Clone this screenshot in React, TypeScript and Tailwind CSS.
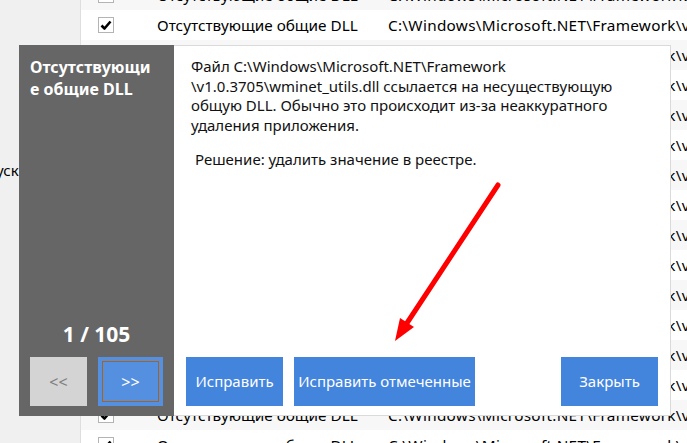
import React from 'react';

const rows = Array.from({ length: 16 }, (_, i) => i);

function CheckBox() {
  return (
    <span className="flex h-[16px] w-[16px] shrink-0 items-center justify-center border border-[#b4b4b4] bg-white">
      <svg width="12" height="12" viewBox="0 0 12 12">
        <path d="M1.5 6.5 L4.5 9.5 L10.5 2.5" fill="none" stroke="#000" strokeWidth="2.6" strokeLinejoin="round" />
      </svg>
    </span>
  );
}

function ListRow({ index }: { index: number }) {
  return (
    <div
      className={
        'flex h-[30px] items-center whitespace-nowrap pl-[17px] text-[15.3px] text-black ' +
        (index % 2 === 0 ? 'bg-[#f7f7f7]' : 'bg-white')
      }
    >
      <CheckBox />
      <span className="ml-[43px] w-[231px] shrink-0 overflow-hidden">Отсутствующие общие DLL</span>
      <span className="tracking-[0.3px]">C:\Windows\Microsoft.NET\Framework\v1.0.3705\wminet_utils.dll</span>
    </div>
  );
}

export default function App() {
  return (
    <div
      className="relative h-[443px] w-[687px] overflow-hidden bg-white"
      style={{ fontFamily: '"Noto Sans", "Open Sans", sans-serif' }}
    >
      {/* window behind the dialog: side menu and issue list */}
      <div className="flex h-full">
        <aside className="w-[81px] shrink-0 border-r border-[#dedede] bg-[#f0f0f0] pt-[159px] text-[15px] text-black">
          <div className="ml-[-30px] whitespace-nowrap">Запуск</div>
        </aside>
        <div className="mt-[-20px] min-w-0 flex-1">
          {rows.map((i) => (
            <ListRow key={i} index={i} />
          ))}
        </div>
      </div>

      {/* details dialog */}
      <div className="absolute left-[19px] top-[45px] flex h-[371px] w-[652px]">
        <div className="flex w-[155px] flex-col bg-[#666666] px-[11px] pt-[11px] pb-[10px]">
          <h2 className="w-[128px] break-all text-[16px] font-bold leading-[22px] text-white">
            Отсутствующие общие DLL
          </h2>
          <div className="mt-auto text-center text-[21px] font-bold leading-[27px] text-white">1 / 105</div>
          <div className="mt-[9px] flex gap-[11px]">
            <button className="flex h-[49px] flex-1 items-center justify-center bg-[#d4d4d4] text-[16px] text-[#808080]">
              &lt;&lt;
            </button>
            <button className="flex h-[49px] flex-1 items-center justify-center bg-[#5590e0] p-[4px]">
              <span className="flex h-full w-full items-center justify-center border border-[#a8641e] text-[16px] text-white">
                &gt;&gt;
              </span>
            </button>
          </div>
        </div>

        <div className="flex flex-1 flex-col border border-l-0 border-[#dadada] bg-white px-[12px] pt-[11px] pb-[9px] text-[15px] text-[#111]">
          <p className="pl-[5px] leading-[19.5px]">
            Файл C:\Windows\Microsoft.NET\Framework
            <br />
            \v1.0.3705\wminet_utils.dll ссылается на несуществующую
            <br />
            общую DLL. Обычно это происходит из-за неаккуратного
            <br />
            удаления приложения.
          </p>
          <p className="mt-[15px] pl-[9px] leading-[19.5px]">Решение: удалить значение в реестре.</p>

          <div className="mt-auto flex gap-[11px]">
            <button className="h-[49px] w-[97px] bg-[#4384dc] text-white">Исправить</button>
            <button className="h-[49px] w-[181px] bg-[#4384dc] text-white">Исправить отмеченные</button>
            <button className="ml-auto h-[49px] w-[97px] bg-[#4384dc] text-white">Закрыть</button>
          </div>
        </div>
      </div>

      {/* red pointer towards the buttons */}
      <svg className="pointer-events-none absolute left-0 top-0" width="687" height="443" viewBox="0 0 687 443">
        <line x1="498" y1="185" x2="407" y2="323" stroke="#ff0000" strokeWidth="5" strokeLinecap="round" />
        <polygon points="395,341 400,318 414,327" fill="#ff0000" />
      </svg>
    </div>
  );
}
